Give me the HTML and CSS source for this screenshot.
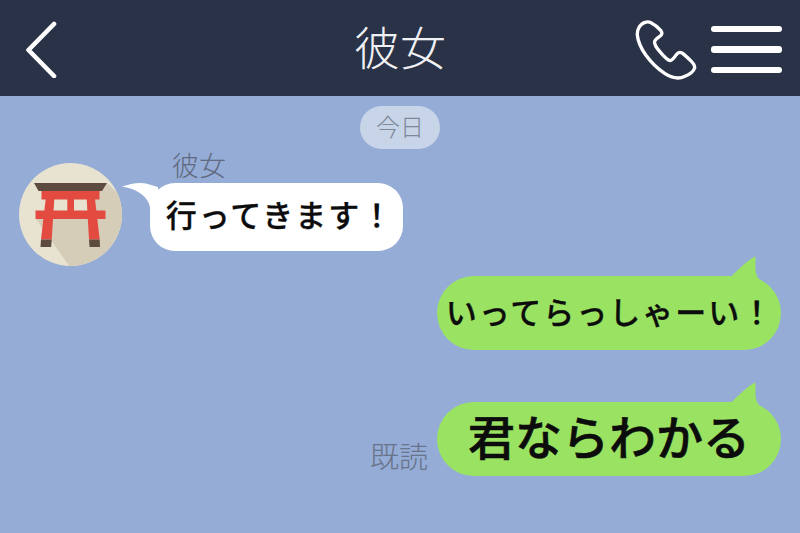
FILE: index.html
```html
<!DOCTYPE html>
<html lang="ja">
<head>
<meta charset="utf-8">
<title>彼女</title>
<link rel="stylesheet" href="styles.css">
</head>
<body>
<div class="app">
  <header class="topbar">
    <div class="topbar-left">
      <svg class="icon-back" viewBox="0 0 36 60" aria-hidden="true"><path d="M30 6 4.500 32 30 58"/></svg>
    </div>
    <h1 class="title">彼女</h1>
    <div class="topbar-right">
      <svg class="icon-phone" viewBox="100 55 200 190" aria-hidden="true"><path d="M136 68C122 72 112 88 113 106C116 142 150 192 196 222C218 236 240 238 256 230C270 224 282 214 285 205C286 198 282 192 276 186C266 176 256 166 247 160C240 156 235 158 230 165C224 174 218 182 212 183C204 183 192 170 178 153C168 141 163 133 165 125C167 118 176 113 183 108C188 104 188 98 183 92C174 82 164 74 154 69C148 66 142 66 136 68Z"/></svg>
      <div class="menu"><span class="menu-bar"></span><span class="menu-bar"></span><span class="menu-bar"></span></div>
    </div>
  </header>
  <main class="chat">
    <div class="date-row"><span class="date-pill">今日</span></div>
    <section class="row-in">
      <svg class="avatar" viewBox="19 163 103 103" aria-hidden="true">
        <defs><clipPath id="disc"><circle cx="70.5" cy="214.5" r="51.5"/></clipPath></defs>
        <circle cx="70.5" cy="214.5" r="51.5" fill="#e8e3d0"/>
        <polygon clip-path="url(#disc)" points="107,183 130,205 125,270 72,270 36,219 95,219 95,191" fill="#d5cdb8"/>
        <polygon points="34,183 107,183 102,191 38.500,191" fill="#5e4b40"/>
        <rect x="41.500" y="191" width="58" height="8.500" fill="#e44b40"/>
        <rect x="35.500" y="210.500" width="70" height="8.500" fill="#e44b40"/>
        <rect x="67.300" y="199" width="6.700" height="12" fill="#e44b40"/>
        <polygon points="45.700,199 54.300,199 51.700,239.500 41,239.500" fill="#e44b40"/>
        <polygon points="86.700,199 95,199 99.700,239.500 89,239.500" fill="#e44b40"/>
        <polygon points="41,239.500 51.700,239.500 51.200,247 40.500,247" fill="#5e4b40"/>
        <polygon points="89,239.500 99.700,239.500 100,247 89.500,247" fill="#5e4b40"/>
      </svg>
      <div class="in-body">
        <div class="name">彼女</div>
        <div class="bubble bubble-white">
          <svg class="tail-white" viewBox="120 180 45 30" aria-hidden="true"><path d="M122 186.500C130 184 138 182 146 183.500C150 184.500 154 186 158 187L160 207 150 207C148 197 138 189 122 186.500Z"/></svg>
          <span class="msg">行ってきます！</span>
        </div>
      </div>
    </section>
    <section class="row-out row-out-first">
      <div class="bubble bubble-green bubble-mid">
        <svg class="tail-green" viewBox="0 0 45 30" aria-hidden="true"><path d="M6.700 21C15 13 22 6 29 2C31 1 30.500 4 30.500 8C30 15 31 21 35 25L6 25Z"/></svg>
        <span class="msg">いってらっしゃーい！</span>
      </div>
    </section>
    <section class="row-out row-out-second">
      <span class="read">既読</span>
      <div class="bubble bubble-green bubble-big">
        <svg class="tail-green" viewBox="0 0 45 30" aria-hidden="true"><path d="M6.700 21C15 13 22 6 29 2C31 1 30.500 4 30.500 8C30 15 31 21 35 25L6 25Z"/></svg>
        <span class="msg">君ならわかる</span>
      </div>
    </section>
  </main>
</div>
</body>
</html>
```

FILE: styles.css
```css
* { box-sizing: border-box; }
html, body { margin: 0; padding: 0; }
body {
  width: 800px;
  height: 533px;
  overflow: hidden;
  background: #94acd6;
  font-family: "Noto Sans CJK JP", "Noto Sans", sans-serif;
}
.app { display: flex; flex-direction: column; height: 533px; }

.topbar {
  height: 96px;
  flex: none;
  background: #2a3247;
  display: grid;
  grid-template-columns: 1fr auto 1fr;
  align-items: center;
  padding: 0 18px 0 24px;
}
.topbar-left { display: flex; align-items: center; }
.icon-back { width: 36px; height: 60px; margin-top: -1px; fill: none; stroke: #fff; stroke-width: 4.6; stroke-linecap: round; stroke-linejoin: round; }
.title { margin: 0 0 6px -6px; font-size: 46px; line-height: 60px; font-weight: 300; color: #f0f1f4; }
.topbar-right { display: flex; align-items: center; justify-content: flex-end; gap: 11px; }
.icon-phone { width: 66.670px; height: 63.330px; margin-top: 4px; fill: none; stroke: #fff; stroke-width: 10; stroke-linejoin: round; }
.menu { display: flex; flex-direction: column; gap: 14px; width: 71px; margin-top: 3px; }
.menu-bar { display: block; height: 6.500px; background: #fff; border-radius: 3px; }

.chat { flex: 1; display: flex; flex-direction: column; }
.date-row { display: flex; justify-content: center; margin-top: 10px; }
.date-pill {
  width: 80px;
  height: 43px;
  border-radius: 22px;
  background: #c8d4e7;
  color: #7d8899;
  font-size: 24px;
  font-weight: 300;
  line-height: 40px;
  text-align: center;
}

.row-in { display: flex; align-items: flex-start; padding-left: 19px; gap: 28px; }
.avatar { width: 103px; height: 103px; margin-top: 14px; flex: none; }
.in-body { display: flex; flex-direction: column; align-items: flex-start; }
.name { height: 34px; padding-left: 22px; font-size: 27px; line-height: 31px; font-weight: 300; color: #616a80; }

.bubble { position: relative; display: flex; align-items: center; justify-content: center; color: #0c0c0c; font-weight: 500; }
.bubble-white { width: 253px; height: 68px; background: #fff; border-radius: 25px; font-size: 31px; letter-spacing: 2px; padding: 0 0 7px 7px; -webkit-text-stroke: 0.3px #0c0c0c; }
.tail-white { position: absolute; left: -30px; top: -3px; width: 45px; height: 30px; fill: #fff; }
.bubble-green { width: 344px; height: 74px; background: #9ae262; border-radius: 37px; }
.tail-green { position: absolute; right: 11px; top: -21px; width: 45px; height: 30px; fill: #9ae262; }
.bubble-mid { font-size: 31px; letter-spacing: 2px; padding: 0 0 5px 2px; -webkit-text-stroke: 0.3px #0c0c0c; }
.bubble-big { font-size: 47px; padding-bottom: 10px; -webkit-text-stroke: 0.6px #0c0c0c; }
.msg { position: relative; white-space: nowrap; }

.row-out { display: flex; justify-content: flex-end; align-items: flex-end; padding-right: 19px; }
.row-out-first { margin-top: 10px; }
.row-out-second { margin-top: 52px; gap: 9px; }
.read { font-size: 29px; line-height: 36px; margin-bottom: 3px; font-weight: 300; color: #69738a; }
```
